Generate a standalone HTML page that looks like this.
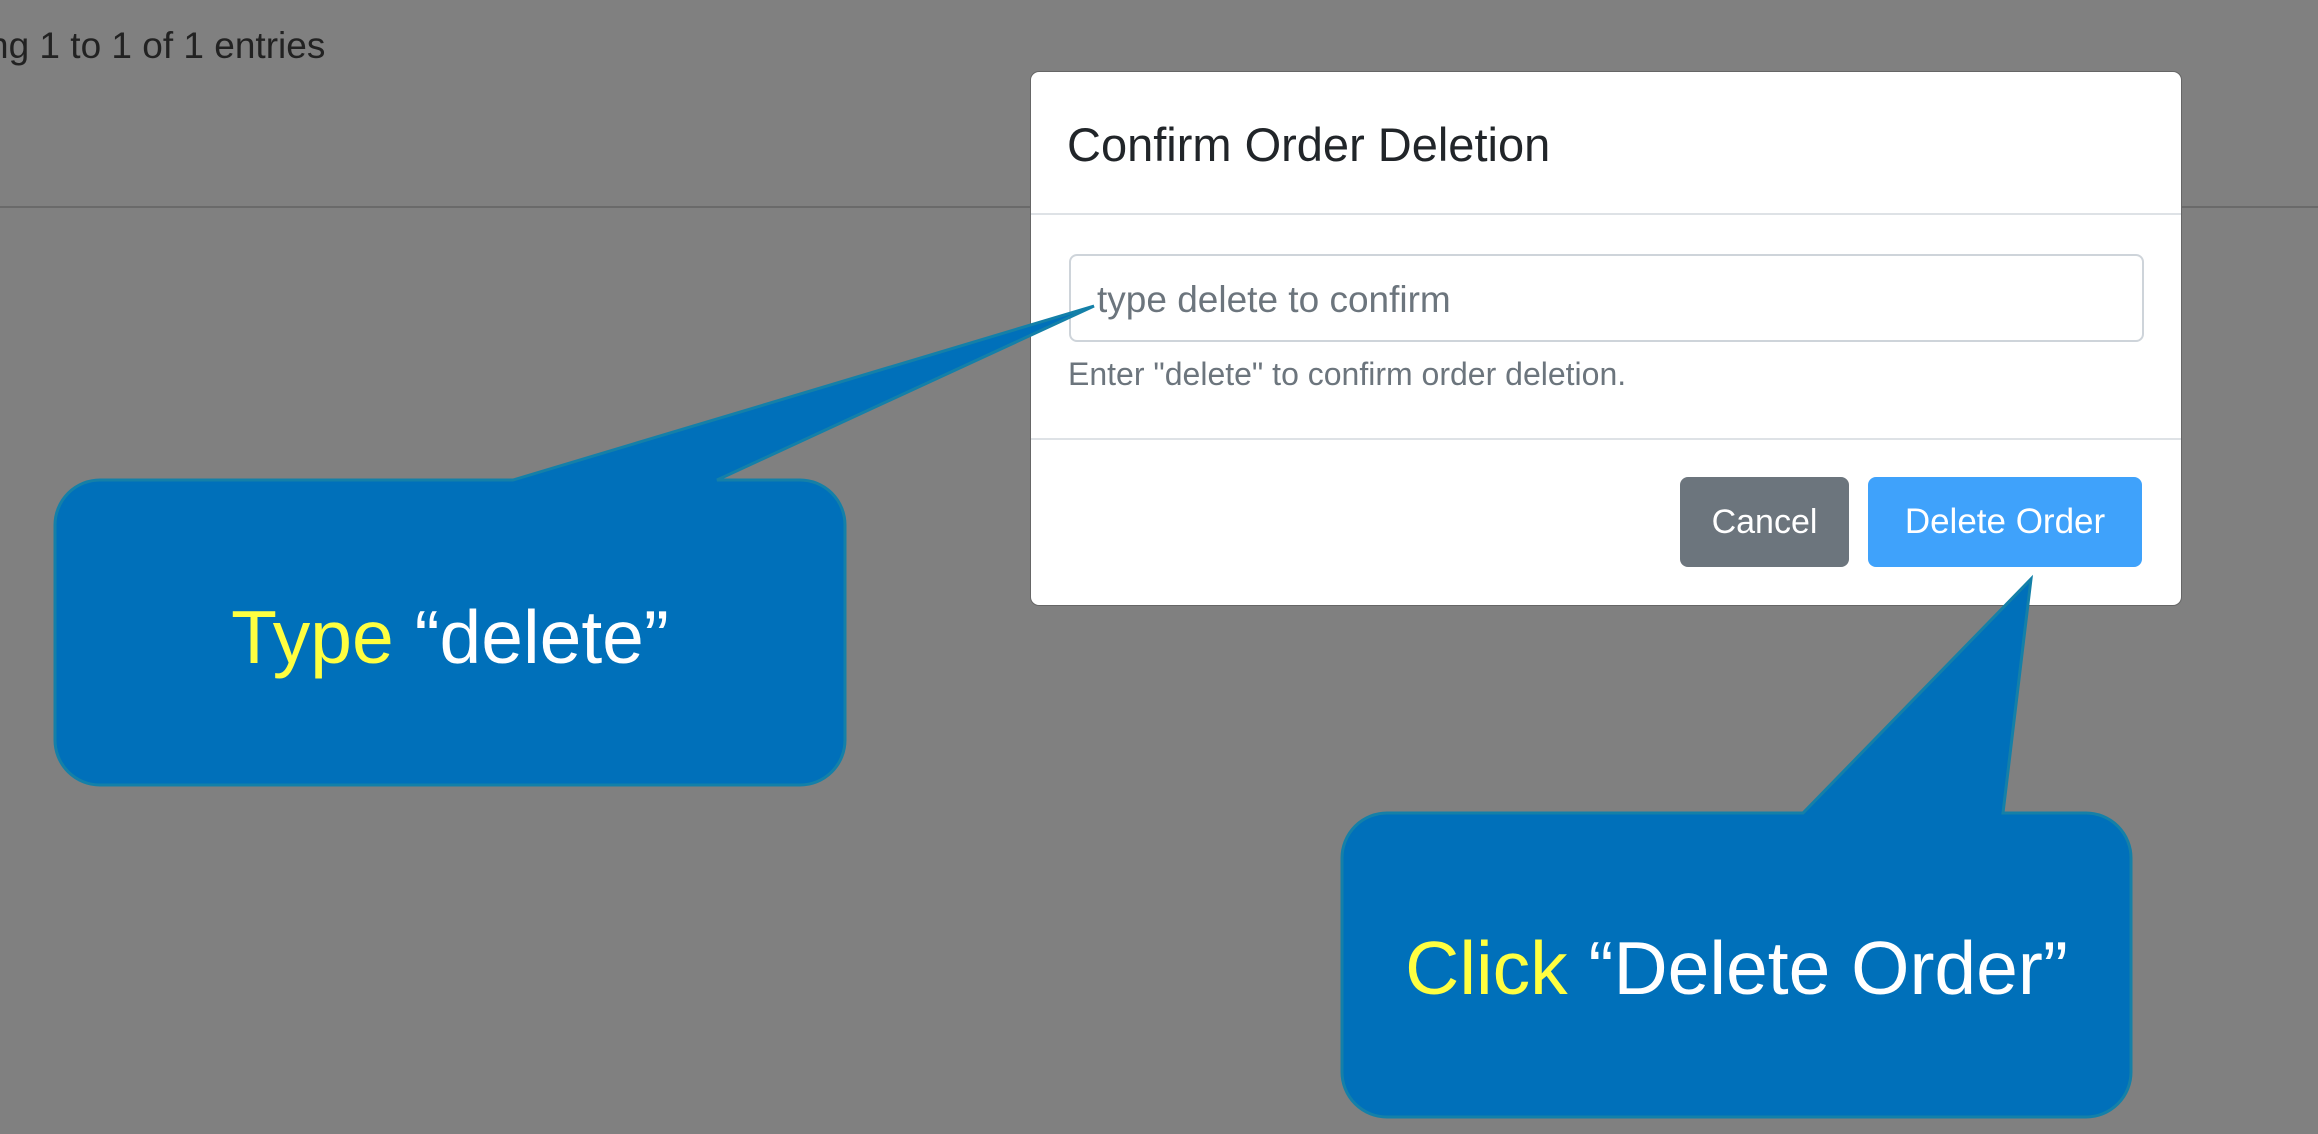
<!DOCTYPE html>
<html><head><meta charset="utf-8"><style>
body{margin:0;width:2318px;height:1134px;background:#808080;position:relative;overflow:hidden;font-family:"Liberation Sans",sans-serif}
.a{position:absolute;white-space:nowrap}
</style></head><body>
<div class="a" style="left:-12px;top:25px;font-size:37px;color:#222">ng 1 to 1 of 1 entries</div>
<div class="a" style="left:0;top:206px;width:2318px;height:2px;background:#6a6a6a"></div>
<div class="a" style="left:1030px;top:71px;width:1150px;height:533px;background:#fff;border-radius:9px;border:1px solid #666"></div>
<div class="a" style="left:1067px;top:117px;font-size:47px;color:#212529">Confirm Order Deletion</div>
<div class="a" style="left:1031px;top:213px;width:1150px;height:2px;background:#dee2e6"></div>
<div class="a" style="left:1069px;top:254px;width:1071px;height:84px;border:2px solid #ced4da;border-radius:8px"></div>
<div class="a" style="left:1097px;top:279px;font-size:37px;color:#6c757d">type delete to confirm</div>
<div class="a" style="left:1068px;top:356px;font-size:32px;color:#6c757d">Enter "delete" to confirm order deletion.</div>
<div class="a" style="left:1031px;top:438px;width:1150px;height:2px;background:#dee2e6"></div>
<div class="a" style="left:1680px;top:477px;width:169px;height:90px;background:#6c757d;border-radius:8px;color:#fff;font-size:34px;line-height:90px;text-align:center">Cancel</div>
<div class="a" style="left:1868px;top:477px;width:274px;height:90px;background:#3fa2fb;border-radius:8px;color:#fff;font-size:35px;line-height:90px;text-align:center">Delete Order</div>
<svg class="a" style="left:0;top:0" width="2318" height="1134">
<g fill="#0070ba" stroke="#1480a8" stroke-width="3">
<path d="M100 480 H513 L1094 306 L717 480 H800 A45 45 0 0 1 845 525 V740 A45 45 0 0 1 800 785 H100 A45 45 0 0 1 55 740 V525 A45 45 0 0 1 100 480 Z"/>
<path d="M1387 813 H1803 L2031 579 L2003 813 H2086 A45 45 0 0 1 2131 858 V1072 A45 45 0 0 1 2086 1117 H1387 A45 45 0 0 1 1342 1072 V858 A45 45 0 0 1 1387 813 Z"/>
</g></svg>
<div class="a" style="left:55px;top:594px;width:790px;text-align:center;font-size:75px;color:#fff"><span style="color:#ffff40">Type</span> “delete”</div>
<div class="a" style="left:1342px;top:925px;width:789px;text-align:center;font-size:75px;color:#fff"><span style="color:#ffff40">Click</span> “Delete Order”</div>
</body></html>
